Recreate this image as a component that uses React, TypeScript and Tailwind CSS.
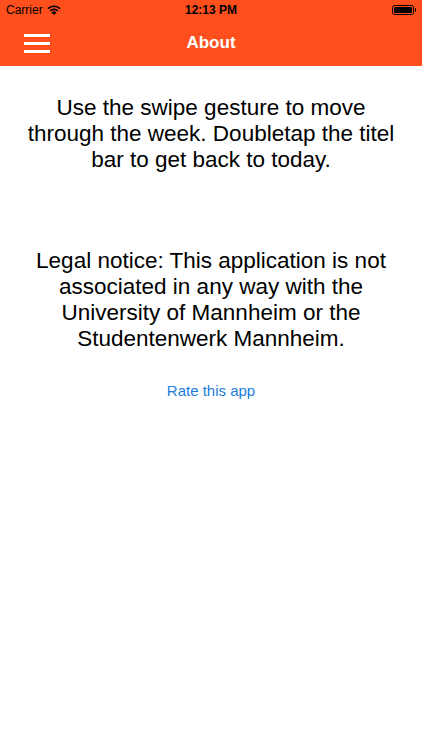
import React from 'react';

const StatusBar: React.FC = () => (
  <div className="relative flex h-5 items-center px-[6px] text-[12px] text-black">
    <div className="flex items-center gap-1">
      <span>Carrier</span>
      <svg width="14" height="10" viewBox="0 0 14 10" className="fill-black">
        <path d="M7 10 L4.6 7.4 A3.4 3.4 0 0 1 9.4 7.4 Z" />
        <path d="M2.6 5.3 A6.3 6.3 0 0 1 11.4 5.3 L10.2 6.5 A4.6 4.6 0 0 0 3.8 6.5 Z" />
        <path d="M0.4 3.1 A9.4 9.4 0 0 1 13.6 3.1 L12.4 4.3 A7.7 7.7 0 0 0 1.6 4.3 Z" />
      </svg>
    </div>
    <span className="absolute left-1/2 -translate-x-1/2 font-semibold">12:13 PM</span>
    <div className="ml-auto flex items-center">
      <div className="flex h-[10px] w-[22px] items-center rounded-[2.5px] border border-black p-[1px]">
        <div className="h-full w-full rounded-[1px] bg-black" />
      </div>
      <div className="ml-[1px] h-[4px] w-[1.5px] rounded-r-sm bg-black" />
    </div>
  </div>
);

export default function App() {
  return (
    <div className="min-h-[750px] w-full bg-white font-['Liberation_Sans',Arial,sans-serif]">
      <header className="bg-[#fe4f1d]">
        <StatusBar />
        <div className="relative flex h-[46px] items-center px-6">
          <div className="flex w-[26px] flex-col gap-[5px]">
            <div className="h-[3px] bg-white" />
            <div className="h-[3px] bg-white" />
            <div className="h-[3px] bg-white" />
          </div>
          <h1 className="absolute left-1/2 -translate-x-1/2 text-[17px] font-bold text-white">About</h1>
        </div>
      </header>
      <main className="flex flex-col items-center px-6 text-center text-black">
        <p className="mt-[29px] text-[22.5px] leading-[26px]">
          Use the swipe gesture to move through the week. Doubletap the titel bar to get back to today.
        </p>
        <p className="mt-[75px] text-[22.5px] leading-[26px]">
          Legal notice: This application is not associated in any way with the University of Mannheim or the Studentenwerk Mannheim.
        </p>
        <button className="mt-[28px] text-[15px] text-[#1a7ed8]">Rate this app</button>
      </main>
    </div>
  );
}
